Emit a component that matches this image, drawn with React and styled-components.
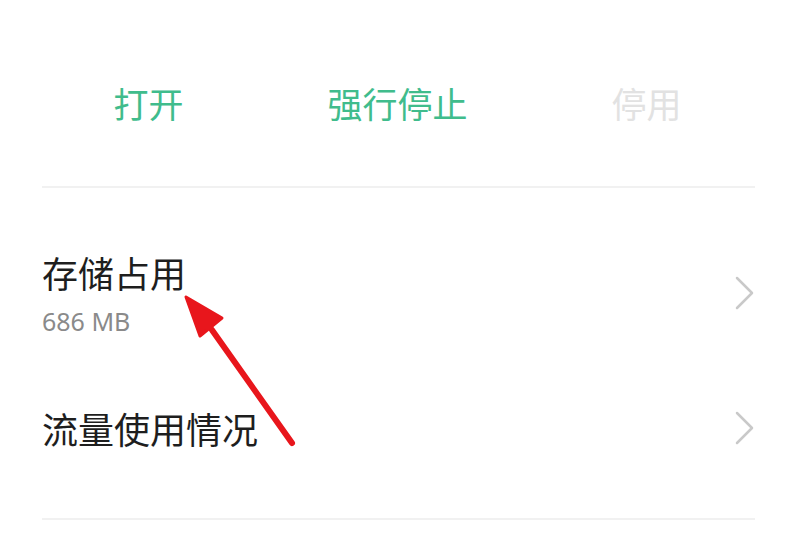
import React from "react";
import styled, { createGlobalStyle } from "styled-components";

const Global = createGlobalStyle`
  html, body { margin: 0; padding: 0; background: #ffffff; }
  body { font-family: "Noto Sans CJK SC", "Noto Sans", sans-serif; }
`;

const Page = styled.div`
  position: relative;
  width: 800px;
  height: 539px;
  overflow: hidden;
  background: #fff;
`;

const ActionRow = styled.div`
  display: grid;
  grid-template-columns: repeat(3, 249px);
  padding: 83px 0 0 24px;
  height: 103px;
`;

const ActionButton = styled.div`
  text-align: center;
  font-size: 35px;
  line-height: 40px;
  color: ${(p) => (p.$disabled ? "#e2e2e2" : "#40bc8c")};
`;

const Divider = styled.div`
  margin: 0 45px 0 42px;
  height: 2px;
  background: #f1f1f1;
`;

const List = styled.div`
  display: flex;
  flex-direction: column;
`;

const Item = styled.div`
  display: flex;
  align-items: center;
  justify-content: space-between;
  padding: ${(p) => p.$pt}px 44px ${(p) => p.$pb}px 42px;
`;

const Texts = styled.div`
  display: flex;
  flex-direction: column;
`;

const Title = styled.div`
  font-size: 36px;
  line-height: 44px;
  color: #1e1e1e;
`;

const Sub = styled.div`
  font-family: "Noto Sans", sans-serif;
  font-size: 25px;
  line-height: 30px;
  color: #8a8a8a;
  margin-top: 12px;
`;

const Chevron = () => (
  <svg width="22" height="36" viewBox="0 0 22 36">
    <path d="M3 3 L18 18 L3 33" fill="none" stroke="#c9c9c9" strokeWidth="2.5" strokeLinecap="round" strokeLinejoin="round" />
  </svg>
);

const Arrow = styled.svg`
  position: absolute;
  left: 0;
  top: 0;
  pointer-events: none;
`;

export default function App() {
  return (
    <Page>
      <Global />
      <ActionRow>
        <ActionButton>打开</ActionButton>
        <ActionButton>强行停止</ActionButton>
        <ActionButton $disabled>停用</ActionButton>
      </ActionRow>
      <Divider />
      <List>
        <Item $pt={62} $pb={40}>
          <Texts>
            <Title>存储占用</Title>
            <Sub>686 MB</Sub>
          </Texts>
          <Chevron />
        </Item>
        <Item $pt={30} $pb={68}>
          <Texts>
            <Title>流量使用情况</Title>
          </Texts>
          <Chevron />
        </Item>
      </List>
      <Divider />
      <Arrow width="800" height="539" viewBox="0 0 800 539">
        <line x1="292" y1="443" x2="212" y2="330" stroke="#e8161c" strokeWidth="6" strokeLinecap="round" />
        <polygon points="186,297 222,318 200,336" fill="#e8161c" stroke="#e8161c" strokeWidth="3" strokeLinejoin="round" />
      </Arrow>
    </Page>
  );
}
